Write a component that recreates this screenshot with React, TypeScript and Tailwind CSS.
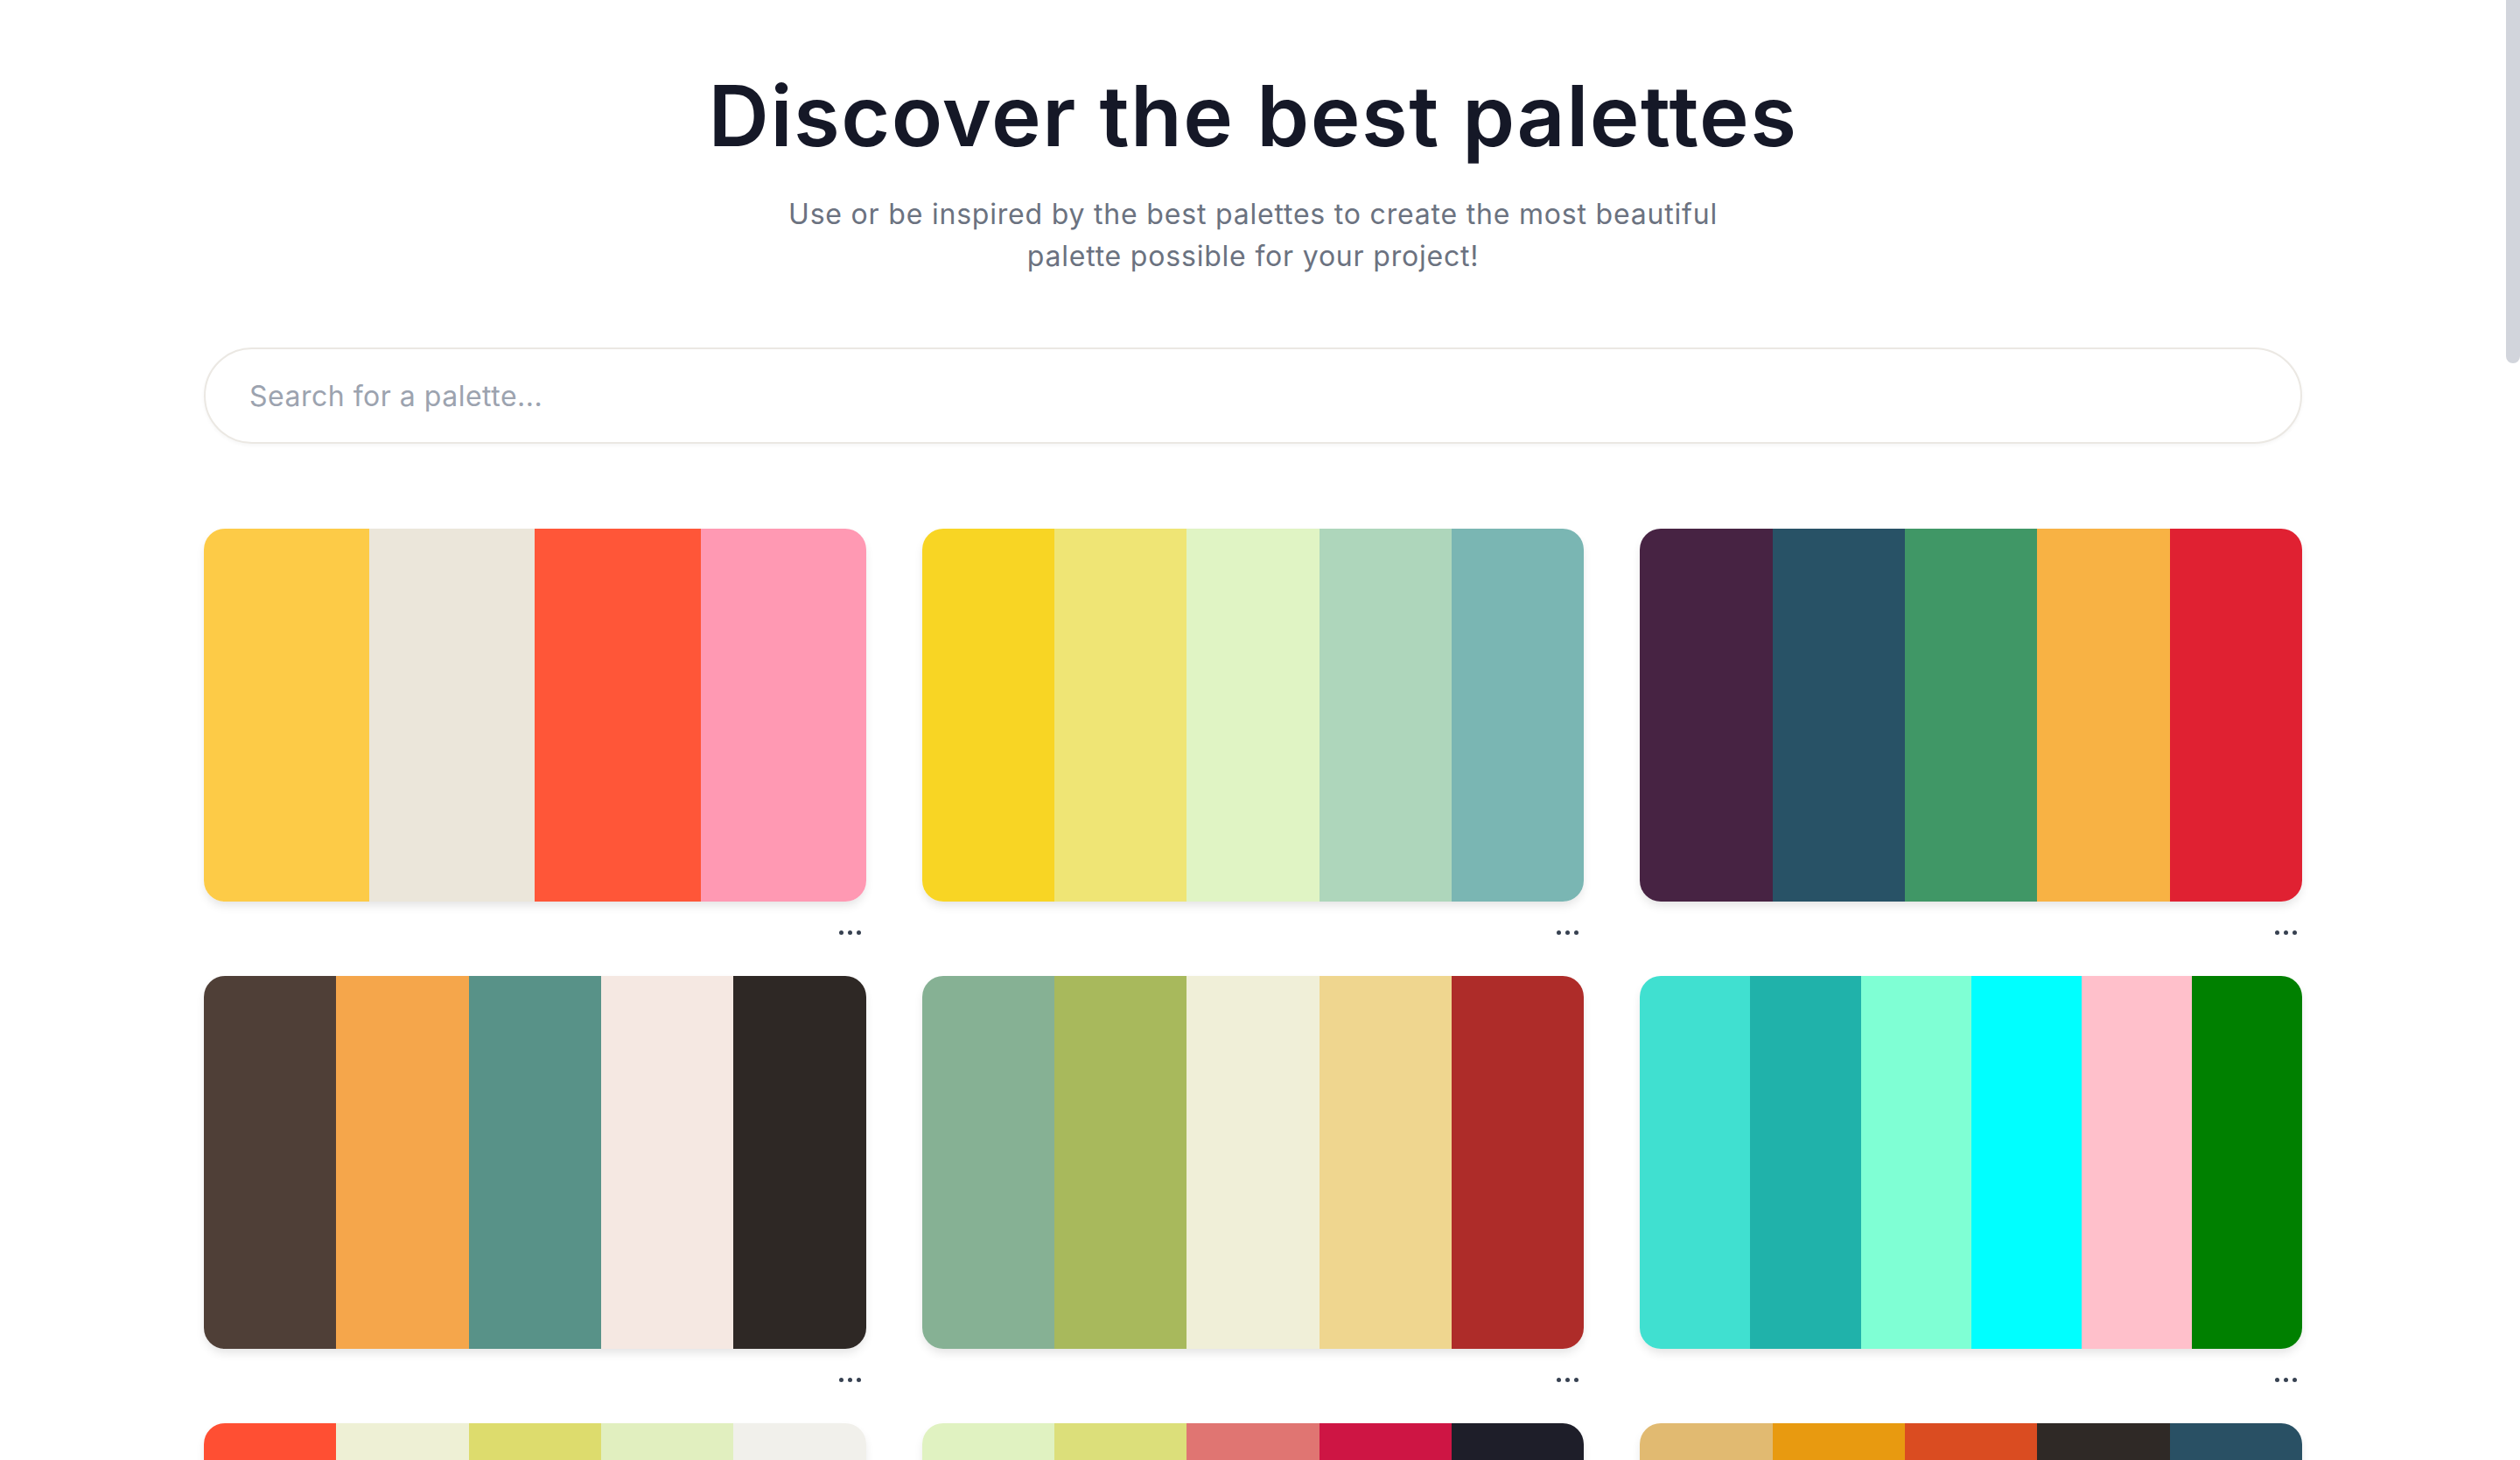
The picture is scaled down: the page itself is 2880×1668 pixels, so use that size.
import { useState } from "react"

type Palette = {
    id: number
    colors: string[]
}

const palettes: Palette[] = [
    { id: 1, colors: ["#FDCB47", "#EBE6DA", "#FF5638", "#FF99B3"] },
    { id: 2, colors: ["#F8D524", "#EFE575", "#E0F4C4", "#AED6BB", "#7AB6B3"] },
    { id: 3, colors: ["#472343", "#285266", "#409766", "#F8B244", "#E02132"] },
    { id: 4, colors: ["#4F3F37", "#F5A64B", "#589288", "#F5E8E2", "#2E2825"] },
    { id: 5, colors: ["#86B194", "#A8B95C", "#F0EFD8", "#EFD68F", "#AE2C29"] },
    { id: 6, colors: ["#40E0D0", "#20B2AA", "#7FFFD4", "#00FFFF", "#FFC0CB", "#008000"] },
    { id: 7, colors: ["#FF4F33", "#EEF0D5", "#DDDC6D", "#E1EFBF", "#F1F0EB"] },
    { id: 8, colors: ["#E0F2C1", "#DCDF7A", "#E07572", "#CE1544", "#1E1E29"] },
    { id: 9, colors: ["#E1BA71", "#E89A10", "#DA4C21", "#2F2926", "#295064"] },
    { id: 10, colors: ["#264653", "#2A9D8F", "#E9C46A", "#F4A261", "#E76F51"] },
    { id: 11, colors: ["#CDB4DB", "#FFC8DD", "#FFAFCC", "#BDE0FE", "#A2D2FF"] },
    { id: 12, colors: ["#003049", "#D62828", "#F77F00", "#FCBF49", "#EAE2B7"] },
    { id: 13, colors: ["#606C38", "#283618", "#FEFAE0", "#DDA15E", "#BC6C25"] },
    { id: 14, colors: ["#8ECAE6", "#219EBC", "#023047", "#FFB703", "#FB8500"] },
    { id: 15, colors: ["#FFBE0B", "#FB5607", "#FF006E", "#8338EC", "#3A86FF"] },
    { id: 16, colors: ["#EF476F", "#FFD166", "#06D6A0", "#118AB2", "#073B4C"] },
    { id: 17, colors: ["#F6BD60", "#F7EDE2", "#F5CAC3", "#84A59D", "#F28482"] },
    { id: 18, colors: ["#0B090A", "#161A1D", "#660708", "#A4161A", "#E5383B"] },
]

const PaletteCard = ({ colors }: Palette) => {
    return (
        <div className="flex flex-col">
            <div className="flex h-[426px] overflow-hidden rounded-[24px] shadow-[0_6px_12px_-2px_rgba(0,0,0,0.12)]">
                {colors.map((c, i) => (
                    <div key={i} className="h-full flex-1" style={{ backgroundColor: c }} />
                ))}
            </div>
            {/* more button */}
            <div className="mt-[33px] flex justify-end pr-[6px]">
                <button className="flex h-[5px] items-center gap-[5px]" aria-label="More options">
                    <span className="h-[5px] w-[5px] rounded-full bg-[#374151]" />
                    <span className="h-[5px] w-[5px] rounded-full bg-[#374151]" />
                    <span className="h-[5px] w-[5px] rounded-full bg-[#374151]" />
                </button>
            </div>
        </div>
    )
}

export default function App() {
    const [query, setQuery] = useState("")

    return (
        <div className="flex h-screen bg-white font-[Inter,sans-serif]">
            <div className="flex-1 overflow-y-auto [scrollbar-width:none]">
                <main className="mx-auto w-full max-w-[2398px] pb-[120px] pt-[84px]">
                    <h1 className="text-center text-[96px] font-semibold leading-none tracking-[1.5px] text-[#151827]">
                        Discover the best palettes
                    </h1>
                    <p className="mx-auto mt-[41px] max-w-[1100px] text-center text-[32px] leading-[48px] tracking-[0.8px] text-[#6b7280]">
                        Use or be inspired by the best palettes to create the most beautiful palette possible for your project!
                    </p>

                    {/* search */}
                    <input
                        value={query}
                        onChange={(e) => setQuery(e.target.value)}
                        placeholder="Search for a palette..."
                        className="mt-[80px] h-[110px] w-full rounded-full border-2 border-[#ebe8e3] bg-white pl-[50px] text-[32px] tracking-[0.5px] text-[#111827] shadow-[0_2px_4px_rgba(0,0,0,0.04)] outline-none placeholder:text-[#9ca3af]"
                    />

                    <div className="mt-[97px] grid grid-cols-3 gap-x-[64px] gap-y-[47px]">
                        {palettes.map((p) => (
                            <PaletteCard key={p.id} {...p} />
                        ))}
                    </div>
                </main>
            </div>
            {/* scrollbar */}
            <div className="w-[16px] shrink-0 bg-white">
                <div className="h-[415px] rounded-b-full bg-[#d2d5dc]" />
            </div>
        </div>
    )
}
